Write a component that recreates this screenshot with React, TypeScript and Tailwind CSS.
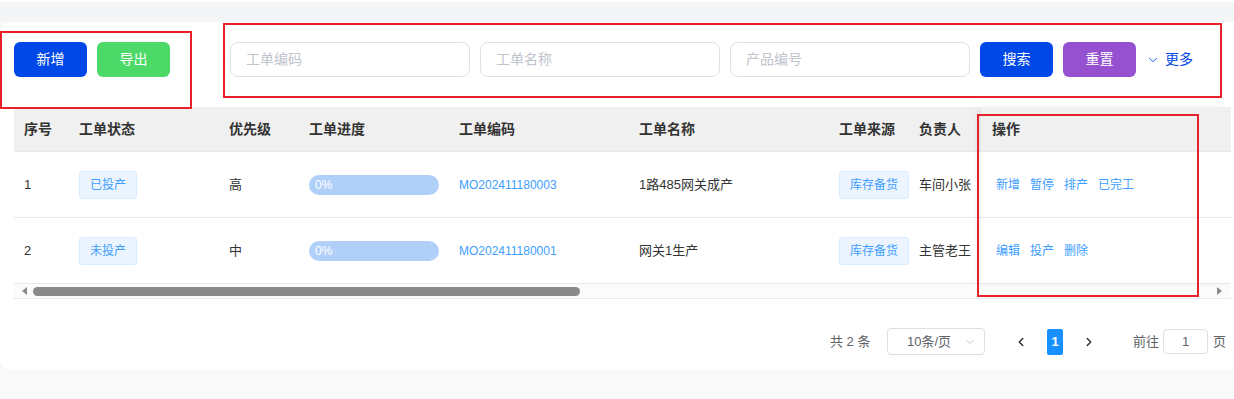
import { ChevronDown, ChevronLeft, ChevronRight } from 'lucide-react'

const font = "font-['Liberation_Sans','Noto_Sans_CJK_SC',sans-serif]"

const cols = [
  { title: '序号', w: 'w-[55px]' },
  { title: '工单状态', w: 'w-[150px]' },
  { title: '优先级', w: 'w-[80px]' },
  { title: '工单进度', w: 'w-[150px]' },
  { title: '工单编码', w: 'w-[180px]' },
  { title: '工单名称', w: 'w-[200px]' },
  { title: '工单来源', w: 'w-[80px]' },
  { title: '负责人', w: 'w-[72px]' },
]

const rows = [
  { no: '1', status: '已投产', level: '高', code: 'MO202411180003', name: '1路485网关成产', source: '库存备货', owner: '车间小张', ops: ['新增', '暂停', '排产', '已完工'] },
  { no: '2', status: '未投产', level: '中', code: 'MO202411180001', name: '网关1生产', source: '库存备货', owner: '主管老王', ops: ['编辑', '投产', '删除'] },
]

function Tag({ text }: { text: string }) {
  return (
    <span className="inline-flex shrink-0 whitespace-nowrap items-center h-[28px] px-[10px] rounded-[3px] border border-[#d9ecff] bg-[#ecf5ff] text-[#409eff] text-[12px]">
      {text}
    </span>
  )
}

function Cell({ w, children }: { w: string; children?: React.ReactNode }) {
  return <div className={`${w} shrink-0 pl-[10px] flex items-center whitespace-nowrap`}>{children}</div>
}

export default function App() {
  return (
    <div className={`${font} relative w-[1234px] h-[399px] bg-[#f9f9f9] overflow-hidden`}>
      <div className="h-[2px] bg-white" />
      <div className="h-[20px] bg-[#f4f5f7]" />
      <div className="h-[348px] bg-white rounded-l-[10px] pl-[14px] pt-[20px]">
        {/* toolbar */}
        <div className="flex items-center h-[35px]">
          <button className="w-[73px] h-[35px] rounded-[6px] bg-[#0047e8] text-white text-[14px]">新增</button>
          <button className="ml-[10px] w-[73px] h-[35px] rounded-[6px] bg-[#4dd967] text-white text-[14px]">导出</button>
          <div className="ml-[60px] flex gap-[10px]">
            {['工单编码', '工单名称', '产品编号'].map((p) => (
              <div key={p} className="w-[240px] h-[35px] rounded-[8px] border border-[#dcdfe6] flex items-center pl-[15px] text-[14px] text-[#c0c4cc]">
                {p}
              </div>
            ))}
          </div>
          <button className="ml-[10px] w-[73px] h-[35px] rounded-[6px] bg-[#0047e8] text-white text-[14px]">搜索</button>
          <button className="ml-[10px] w-[73px] h-[35px] rounded-[6px] bg-[#9651d0] text-white text-[14px]">重置</button>
          <div className="ml-[10px] flex items-center gap-[5px] text-[#0047e8] text-[14px]">
            <ChevronDown size={14} strokeWidth={1.5} />
            <span>更多</span>
          </div>
        </div>

        {/* table */}
        <div className="mt-[30px] w-[1217px] relative">
          <div className="flex h-[45px] bg-[#f0f0f0] border-b border-[#e6e9ee] text-[14px] font-bold text-[#333]">
            {cols.map((c) => (
              <Cell key={c.title} w={c.w}>{c.title}</Cell>
            ))}
          </div>
          {rows.map((r) => (
            <div key={r.no} className="flex h-[66px] border-b border-[#e6e9ee] text-[13px] text-[#333]">
              <Cell w={cols[0].w}>{r.no}</Cell>
              <Cell w={cols[1].w}><Tag text={r.status} /></Cell>
              <Cell w={cols[2].w}>{r.level}</Cell>
              <Cell w={cols[3].w}>
                <div className="w-[130px] h-[20px] rounded-full bg-[#b0d0fa] text-white text-[12px] flex items-center pl-[6px]">0%</div>
              </Cell>
              <Cell w={cols[4].w}><span className="text-[#409eff] text-[12px]">{r.code}</span></Cell>
              <Cell w={cols[5].w}>{r.name}</Cell>
              <Cell w={cols[6].w}><Tag text={r.source} /></Cell>
              <Cell w={cols[7].w}>{r.owner}</Cell>
            </div>
          ))}
          {/* scrollbar */}
          <div className="h-[15px] border-b border-[#e6e9ee] bg-[#fbfbfb] flex items-center">
            <span className="ml-[8px] w-0 h-0 border-y-[4px] border-y-transparent border-r-[5px] border-r-[#8a8a8a]" />
            <div className="ml-[6px] w-[547px] h-[9px] rounded-full bg-[#8a8a8a]" />
            <span className="ml-auto mr-[9px] w-0 h-0 border-y-[4px] border-y-transparent border-l-[5px] border-l-[#8a8a8a]" />
          </div>

          {/* fixed column */}
          <div className="absolute top-0 left-[967px] w-[250px] bg-white shadow-[-5px_0_8px_-2px_rgba(0,0,0,0.08)]">
            <div className="h-[45px] bg-[#f0f0f0] border-b border-[#e6e9ee] flex items-center pl-[11px] text-[14px] font-bold text-[#333]">操作</div>
            {rows.map((r) => (
              <div key={r.no} className="h-[66px] border-b border-[#e6e9ee] flex items-center pl-[15px] gap-[10px] text-[12px] text-[#409eff]">
                {r.ops.map((o) => (
                  <span key={o}>{o}</span>
                ))}
              </div>
            ))}
          </div>
        </div>

        {/* pagination */}
        <div className="mt-[29px] flex items-center text-[13px] text-[#606266] pl-[816px] *:shrink-0">
          <span className="w-[44px] whitespace-nowrap">共 2 条</span>
          <div className="ml-[13px] w-[98px] h-[27px] border border-[#dcdfe6] rounded-[4px] flex items-center pl-[19px] pr-[8px]">
            <span className="text-[13px]">10条/页</span>
            <ChevronDown size={12} className="ml-auto text-[#c0c4cc]" />
          </div>
          <ChevronLeft size={14} strokeWidth={2.5} className="ml-[29px] text-[#303133]" />
          <span className="ml-[19px] w-[16px] h-[26px] rounded-[2px] bg-[#1890ff] text-white font-bold flex items-center justify-center">1</span>
          <ChevronRight size={14} strokeWidth={2.5} className="ml-[19px] text-[#303133]" />
          <span className="ml-[37px] whitespace-nowrap">前往</span>
          <div className="ml-[4px] w-[45px] h-[25px] border border-[#dcdfe6] rounded-[4px] flex items-center justify-center">1</div>
          <span className="ml-[5px]">页</span>
        </div>
      </div>

      {/* annotation boxes */}
      <div className="absolute left-0 top-[31px] w-[192px] h-[78px] border-2 border-[#e8202a]" />
      <div className="absolute left-[223px] top-[23px] w-[999px] h-[75px] border-2 border-[#e8202a]" />
      <div className="absolute left-[977px] top-[114px] w-[222px] h-[183px] border-2 border-[#e8202a]" />
    </div>
  )
}
